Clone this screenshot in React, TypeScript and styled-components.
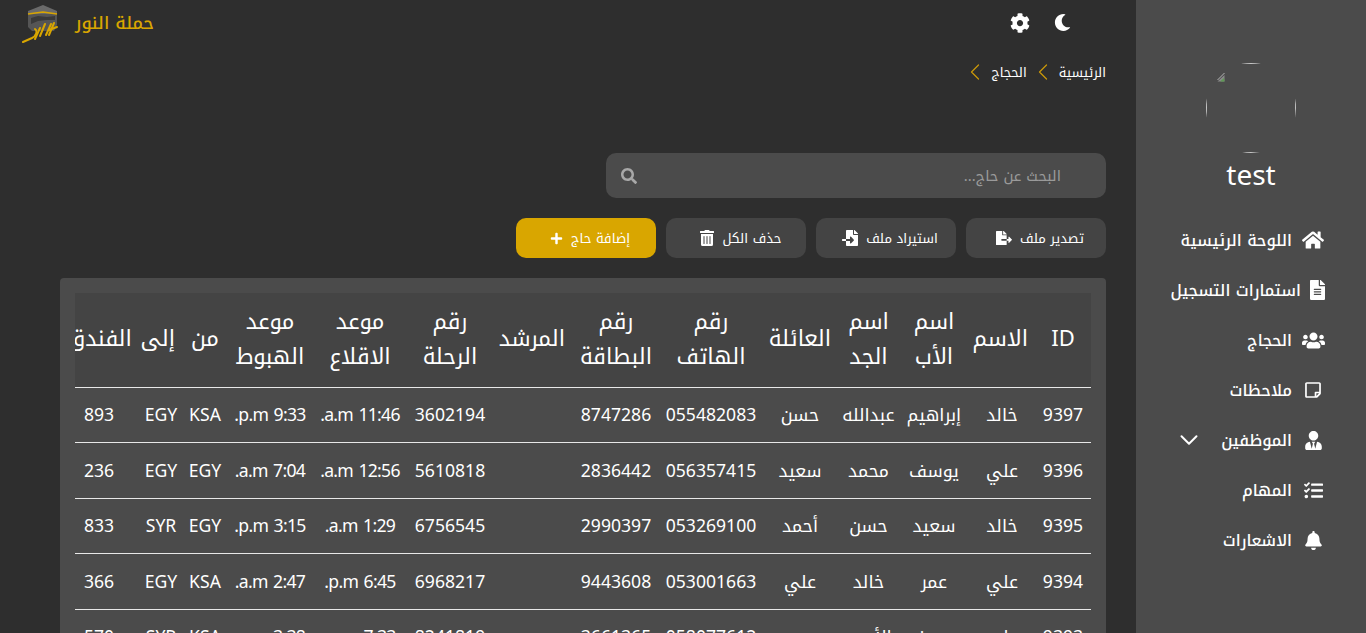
import React from "react";
import styled, { createGlobalStyle } from "styled-components";
import { FaHome, FaFileAlt, FaUsers, FaRegStickyNote, FaUserTie, FaTasks, FaBell, FaCog, FaMoon, FaSearch, FaFileExport, FaFileImport, FaTrashAlt, FaPlus } from "react-icons/fa";
import { ChevronDown, ChevronLeft } from "lucide-react";

const FONT = `"Noto Kufi Arabic", "Noto Sans", "Open Sans", sans-serif`;

const Global = createGlobalStyle`
  html, body { margin: 0; height: 100%; background: #2e2e2e; overflow: hidden; }
  body { font-family: ${FONT}; color: #fff; }
  * { box-sizing: border-box; }
`;

const Page = styled.div`
  direction: rtl;
  display: flex;
  height: 633px;
  overflow: hidden;
`;

const Sidebar = styled.aside`
  flex: 0 0 230px;
  background: #4b4b4b;
  display: flex;
  flex-direction: column;
  align-items: center;
  padding-top: 63px;
`;

const Avatar = styled.div`
  width: 90px;
  height: 90px;
  border-radius: 50%;
  overflow: hidden;
`;

const BrokenImage = styled.div`
  width: 100%;
  height: 100%;
  border: 1px solid #c4c4c4;
  direction: ltr;
  padding: 8px 0 0 10px;
  svg { display: block; }
`;

const UserName = styled.div`
  font-size: 28px;
  line-height: 38px;
  margin-top: 4px;
`;

const Nav = styled.nav`
  width: 100%;
  margin-top: 20px;
  display: flex;
  flex-direction: column;
`;

const NavItem = styled.div`
  height: 50px;
  display: flex;
  align-items: center;
  padding-right: 41px;
  font-size: 16px;
  font-weight: 500;
`;

const NavIcon = styled.span<{ $width: number }>`
  width: ${(p) => p.$width}px;
  display: flex;
  justify-content: center;
  margin-left: 9px;
`;

const NavChevron = styled.span`
  display: flex;
  margin-right: 17px;
`;

const Main = styled.main`
  flex: 1;
  min-width: 0;
  padding: 0 30px 0 60px;
`;

const TopBar = styled.header`
  height: 45px;
  display: flex;
  align-items: center;
  justify-content: space-between;
  margin-left: -38px;
`;

const TopIcons = styled.div`
  display: flex;
  align-items: center;
  gap: 24px;
  margin-right: 35px;
  svg { display: block; }
`;

const Brand = styled.div`
  display: flex;
  align-items: center;
  gap: 17px;
  color: #d9a600;
  font-size: 17.6px;
  font-weight: 500;
  svg { display: block; }
`;

const BrandTitle = styled.span`
  padding-top: 1px;
`;

const Crumbs = styled.div`
  display: flex;
  align-items: center;
  gap: 2px;
  height: 20px;
  margin-top: 17px;
  font-size: 13px;
  svg { display: block; color: #c8960a; flex: none; }
`;

const Search = styled.div`
  width: 500px;
  height: 45px;
  margin-top: 71px;
  border-radius: 10px;
  background: #4b4b4b;
  display: flex;
  align-items: center;
  justify-content: space-between;
  padding: 0 45px 0 15px;
  font-size: 14.8px;
  color: #9a9a9a;
  svg { display: block; color: #a8a8a8; }
`;

const Actions = styled.div`
  display: flex;
  gap: 10px;
  margin-top: 20px;
`;

const ActionButton = styled.div<{ $primary?: boolean }>`
  width: 140px;
  height: 40px;
  border-radius: 10px;
  background: ${(p) => (p.$primary ? "#d9a600" : "#444444")};
  display: flex;
  align-items: center;
  justify-content: center;
  gap: 8px;
  padding-left: 8px;
  font-size: 13.3px;
  svg { display: block; }
`;

const Panel = styled.section`
  margin-top: 20px;
  background: #4b4b4b;
  border-radius: 4px 4px 0 0;
  padding: 15px;
  height: 400px;
`;

const TableClip = styled.div`
  overflow: hidden;
`;

const Table = styled.table`
  table-layout: fixed;
  width: 1033px;
  border-collapse: collapse;
`;

const HeadRow = styled.tr`
  background: #444444;
`;

const Th = styled.th`
  height: 94px;
  padding: 0 7px;
  font-size: 22px;
  font-weight: 400;
  line-height: 35px;
  text-align: center;
  border-bottom: 1px solid #e8e8e8;
  white-space: pre-line;
`;

const Td = styled.td<{ $tight?: boolean }>`
  height: 55.5px;
  padding: 1px 0 0;
  font-size: 17.6px;
  letter-spacing: ${(p) => (p.$tight ? "-0.7px" : "0")};
  text-align: center;
  border-bottom: 1px solid #e8e8e8;
  white-space: nowrap;
`;

const KaabaLogo = () => (
  <svg width="36" height="40" viewBox="0 0 36 40">
    <path d="M6 8 L21 2 L35 8 L35 11 L6 11 Z" fill="#6a6a6a" />
    <path d="M6 11 L35 11 L35 22 L32 28 L10 28 L6 24 Z" fill="#555555" />
    <path d="M9 15 L16 13 L25 14 L33 13 L33 17 L25 17 L16 18 L9 21 Z" fill="#3a3a3a" />
    <path d="M6 11 L21 9 L35 11" fill="none" stroke="#d9a600" strokeWidth="1.5" />
    <g fill="none" stroke="#d9a600" strokeWidth="2" strokeLinecap="round">
      <path d="M32 20 L27 32" />
      <path d="M29 21 L24 32" />
      <path d="M23 21 L18 33" />
      <path d="M18 25 L13 36" />
      <path d="M13 26 C16 28 14 33 10 35 L1 39" />
      <path d="M27 27 L35 24" />
    </g>
  </svg>
);

const BrokenIcon = () => (
  <svg width="8" height="10" viewBox="0 0 8 10">
    <path d="M0.5 9.5 L7.5 3 L7.5 9.5 Z" fill="#8a8a8a" />
    <path d="M3 9.5 L7 6 L7.5 9.5 Z" fill="#5f9a55" />
    <path d="M0.5 8 L7.5 1" stroke="#cfcfcf" strokeWidth="0.8" />
  </svg>
);

const navItems = [
  { label: "اللوحة الرئيسية", width: 24, icon: <FaHome size={22} /> },
  { label: "استمارات التسجيل", width: 15, icon: <FaFileAlt size={20} /> },
  { label: "الحجاج", width: 24, icon: <FaUsers size={23} /> },
  { label: "ملاحظات", width: 24, icon: <FaRegStickyNote size={18} /> },
  { label: "الموظفين", width: 24, icon: <FaUserTie size={19} />, chevron: true },
  { label: "المهام", width: 24, icon: <FaTasks size={19} /> },
  { label: "الاشعارات", width: 24, icon: <FaBell size={19} /> },
];

const columns: [string, number][] = [
  ["ID", 56], ["الاسم", 66], ["اسم\nالأب", 70], ["اسم\nالجد", 61], ["العائلة", 76],
  ["رقم\nالهاتف", 102], ["رقم\nالبطاقة", 88], ["المرشد", 80], ["رقم\nالرحلة", 84],
  ["موعد\nالاقلاع", 96], ["موعد\nالهبوط", 84], ["من", 46], ["إلى", 42], ["الفندق", 82],
];

const rows = [
  ["9397", "خالد", "إبراهيم", "عبدالله", "حسن", "055482083", "8747286", "", "3602194", "11:46 a.m.", "9:33 p.m.", "KSA", "EGY", "893"],
  ["9396", "علي", "يوسف", "محمد", "سعيد", "056357415", "2836442", "", "5610818", "12:56 a.m.", "7:04 a.m.", "EGY", "EGY", "236"],
  ["9395", "خالد", "سعيد", "حسن", "أحمد", "053269100", "2990397", "", "6756545", "1:29 a.m.", "3:15 p.m.", "EGY", "SYR", "833"],
  ["9394", "علي", "عمر", "خالد", "علي", "053001663", "9443608", "", "6968217", "6:45 p.m.", "2:47 a.m.", "KSA", "EGY", "366"],
  ["9393", "علي", "يوسف", "الأمين", "سعيد", "058077612", "3661365", "", "8241819", "7:33 p.m.", "3:38 a.m.", "KSA", "SYR", "570"],
];

export default function App() {
  return (
    <>
      <Global />
      <Page>
        <Sidebar>
          <Avatar>
            <BrokenImage>
              <BrokenIcon />
            </BrokenImage>
          </Avatar>
          <UserName>test</UserName>
          <Nav>
            {navItems.map((item) => (
              <NavItem key={item.label}>
                <NavIcon $width={item.width}>{item.icon}</NavIcon>
                <span>{item.label}</span>
                {item.chevron && (
                  <NavChevron>
                    <ChevronDown size={30} strokeWidth={1.6} />
                  </NavChevron>
                )}
              </NavItem>
            ))}
          </Nav>
        </Sidebar>
        <Main>
          <TopBar>
            <TopIcons>
              <FaMoon size={17} />
              <FaCog size={20} />
            </TopIcons>
            <Brand>
              <BrandTitle>حملة النور</BrandTitle>
              <KaabaLogo />
            </Brand>
          </TopBar>
          <Crumbs>
            <span>الرئيسية</span>
            <ChevronLeft size={28} strokeWidth={1.1} />
            <span>الحجاج</span>
            <ChevronLeft size={28} strokeWidth={1.1} />
          </Crumbs>
          <Search>
            <span>البحث عن حاج...</span>
            <FaSearch size={16} />
          </Search>
          <Actions>
            <ActionButton>
              <span>تصدير ملف</span>
              <FaFileExport size={16} />
            </ActionButton>
            <ActionButton>
              <span>استيراد ملف</span>
              <FaFileImport size={16} />
            </ActionButton>
            <ActionButton>
              <span>حذف الكل</span>
              <FaTrashAlt size={16} />
            </ActionButton>
            <ActionButton $primary>
              <span>إضافة حاج</span>
              <FaPlus size={13} />
            </ActionButton>
          </Actions>
          <Panel>
            <TableClip>
              <Table>
                <colgroup>
                  {columns.map(([label, width]) => (
                    <col key={label} style={{ width }} />
                  ))}
                </colgroup>
                <thead>
                  <HeadRow>
                    {columns.map(([label]) => (
                      <Th key={label}>{label}</Th>
                    ))}
                  </HeadRow>
                </thead>
                <tbody>
                  {rows.map((row) => (
                    <tr key={row[0]}>
                      {row.map((cell, i) => (
                        <Td key={i} $tight={i === 9 || i === 10}>{cell}</Td>
                      ))}
                    </tr>
                  ))}
                </tbody>
              </Table>
            </TableClip>
          </Panel>
        </Main>
      </Page>
    </>
  );
}
